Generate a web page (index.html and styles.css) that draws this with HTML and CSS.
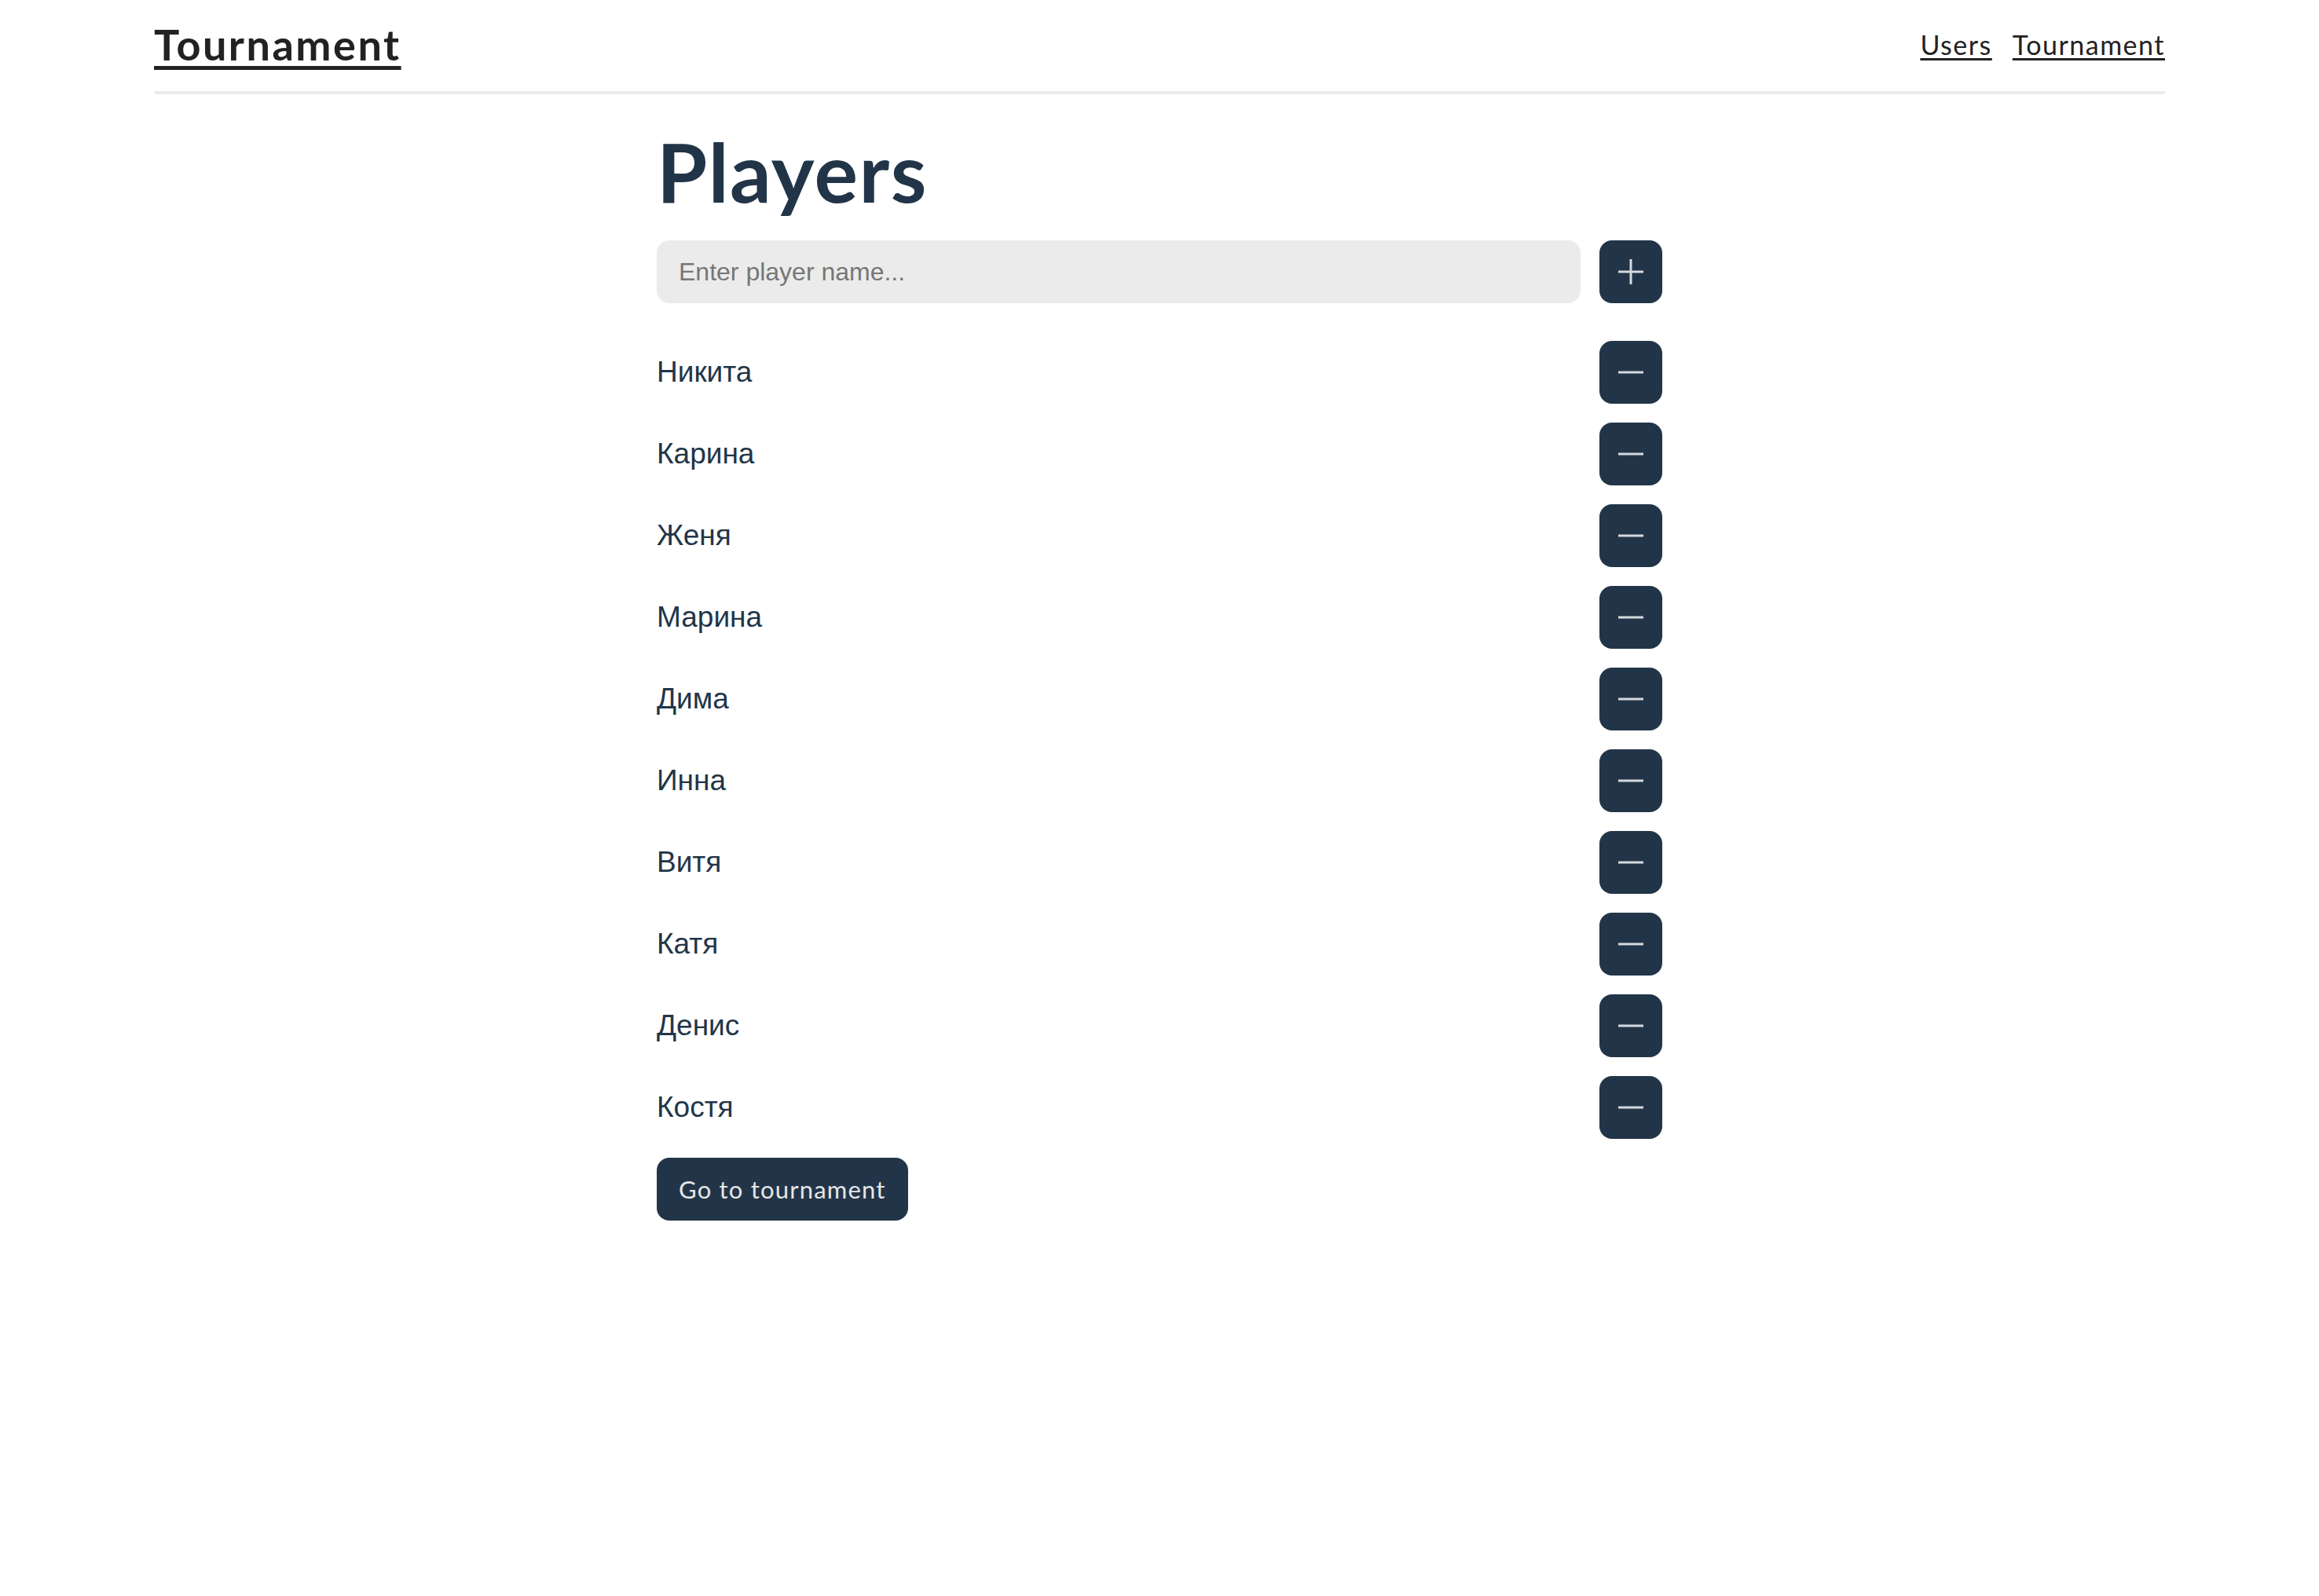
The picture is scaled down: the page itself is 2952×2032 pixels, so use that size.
FILE: index.html
```html
<!DOCTYPE html>
<html lang="ru">
<head>
<meta charset="utf-8">
<title>Tournament</title>
<link rel="stylesheet" href="styles.css">
</head>
<body>
<header class="topbar">
  <a class="logo" href="#">Tournament</a>
  <nav class="nav">
    <a href="#">Users</a>
    <a href="#">Tournament</a>
  </nav>
</header>
<main class="page">
  <h1 class="title">Players</h1>
  <form class="add-row">
    <input class="name-input" type="text" placeholder="Enter player name...">
    <button class="icon-btn" type="button" aria-label="Add">
      <svg viewBox="0 0 32 32" width="32" height="32"><path d="M0 16H32M16 0V32" stroke="#d6d9dc" stroke-width="3" fill="none"/></svg>
    </button>
  </form>
  <ul class="players">
    <li class="player"><span>Никита</span><button class="icon-btn" type="button"><svg viewBox="0 0 32 32" width="32" height="32"><path d="M0 16H32" stroke="#d6d9dc" stroke-width="3"/></svg></button></li>
    <li class="player"><span>Карина</span><button class="icon-btn" type="button"><svg viewBox="0 0 32 32" width="32" height="32"><path d="M0 16H32" stroke="#d6d9dc" stroke-width="3"/></svg></button></li>
    <li class="player"><span>Женя</span><button class="icon-btn" type="button"><svg viewBox="0 0 32 32" width="32" height="32"><path d="M0 16H32" stroke="#d6d9dc" stroke-width="3"/></svg></button></li>
    <li class="player"><span>Марина</span><button class="icon-btn" type="button"><svg viewBox="0 0 32 32" width="32" height="32"><path d="M0 16H32" stroke="#d6d9dc" stroke-width="3"/></svg></button></li>
    <li class="player"><span>Дима</span><button class="icon-btn" type="button"><svg viewBox="0 0 32 32" width="32" height="32"><path d="M0 16H32" stroke="#d6d9dc" stroke-width="3"/></svg></button></li>
    <li class="player"><span>Инна</span><button class="icon-btn" type="button"><svg viewBox="0 0 32 32" width="32" height="32"><path d="M0 16H32" stroke="#d6d9dc" stroke-width="3"/></svg></button></li>
    <li class="player"><span>Витя</span><button class="icon-btn" type="button"><svg viewBox="0 0 32 32" width="32" height="32"><path d="M0 16H32" stroke="#d6d9dc" stroke-width="3"/></svg></button></li>
    <li class="player"><span>Катя</span><button class="icon-btn" type="button"><svg viewBox="0 0 32 32" width="32" height="32"><path d="M0 16H32" stroke="#d6d9dc" stroke-width="3"/></svg></button></li>
    <li class="player"><span>Денис</span><button class="icon-btn" type="button"><svg viewBox="0 0 32 32" width="32" height="32"><path d="M0 16H32" stroke="#d6d9dc" stroke-width="3"/></svg></button></li>
    <li class="player"><span>Костя</span><button class="icon-btn" type="button"><svg viewBox="0 0 32 32" width="32" height="32"><path d="M0 16H32" stroke="#d6d9dc" stroke-width="3"/></svg></button></li>
  </ul>
  <button class="go-btn" type="button">Go to tournament</button>
</main>
</body>
</html>
```
FILE: styles.css
```css
* { box-sizing: border-box; }

body {
  margin: 0;
  background: #ffffff;
  font-family: Lato, "Open Sans", sans-serif;
  color: #222222;
}

.topbar {
  max-width: 2560px;
  margin: 0 auto;
  padding: 24px 0 27px;
  display: flex;
  justify-content: space-between;
  align-items: center;
  position: relative;
}

.topbar::after {
  content: "";
  position: absolute;
  left: 0;
  right: 0;
  bottom: -4px;
  height: 4px;
  border-radius: 2px;
  background: #ebebeb;
}

.logo {
  font-size: 54px;
  font-weight: 700;
  color: #222222;
  text-decoration: underline;
  text-decoration-thickness: 5px;
  text-underline-offset: 7px;
  letter-spacing: 2.5px;
}

.nav {
  display: flex;
  gap: 26px;
}

.nav a {
  font-size: 34px;
  color: #222222;
  text-decoration: underline;
  text-decoration-thickness: 3px;
  text-underline-offset: 4px;
  letter-spacing: 1.5px;
}

.page {
  width: 1280px;
  margin: 0 auto;
  padding-top: 50px;
}

.title {
  margin: 0;
  font-size: 104px;
  line-height: 1;
  font-weight: 700;
  color: #223548;
  letter-spacing: 1.5px;
}

.add-row {
  margin: 36px 0 0;
  display: flex;
  gap: 24px;
}

.name-input {
  flex: 1;
  height: 80px;
  border: none;
  border-radius: 16px;
  background: #ebebeb;
  padding: 0 28px;
  font-family: "Liberation Sans", Arial, sans-serif;
  font-size: 32px;
  color: #223548;
  outline: none;
}

.name-input::placeholder {
  color: #767676;
}

.icon-btn {
  width: 80px;
  height: 80px;
  flex: none;
  border: none;
  border-radius: 16px;
  background: #223548;
  display: flex;
  align-items: center;
  justify-content: center;
  padding: 0;
  cursor: pointer;
}

.players {
  list-style: none;
  margin: 48px 0 0;
  padding: 0;
  display: flex;
  flex-direction: column;
  gap: 24px;
}

.player {
  display: flex;
  justify-content: space-between;
  align-items: center;
  font-family: "Liberation Sans", Arial, sans-serif;
  font-size: 37px;
  color: #223548;
}

.go-btn {
  margin-top: 24px;
  height: 80px;
  padding: 0 28px;
  border: none;
  border-radius: 16px;
  background: #223548;
  color: #e6e6e6;
  font-family: Lato, sans-serif;
  font-size: 31px;
  letter-spacing: 1.2px;
  cursor: pointer;
}
```
